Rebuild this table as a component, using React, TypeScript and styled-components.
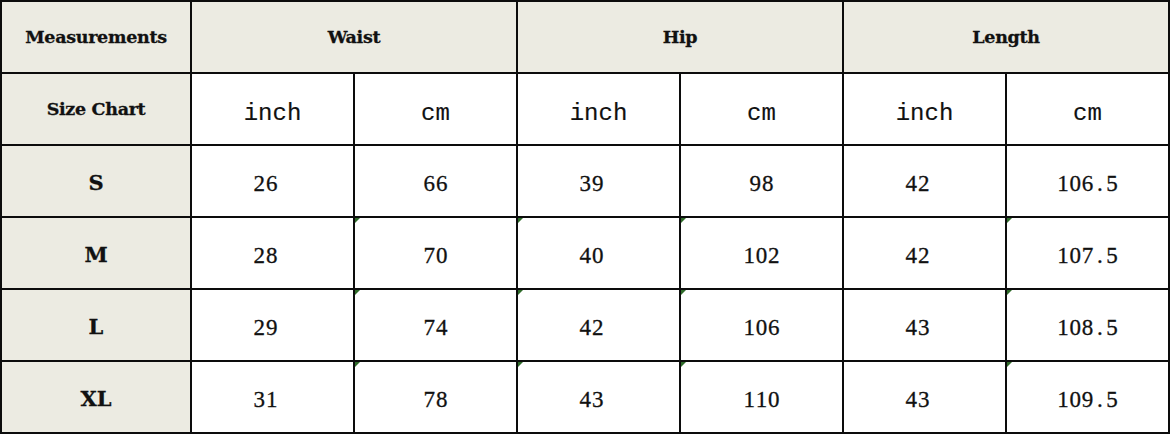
import React from "react";
import styled, { createGlobalStyle, css } from "styled-components";

const Global = createGlobalStyle`
  html, body { margin: 0; padding: 0; background: #fff; }
  body { font-family: "Liberation Serif", serif; }
`;

const Grid = styled.div`
  width: 1170px;
  height: 434px;
  box-sizing: border-box;
  display: grid;
  grid-template-columns: 188px repeat(6, 1fr);
  grid-template-rows: repeat(6, 1fr);
  gap: 2px;
  padding: 2px;
  background: #0c0c0c;
`;

const Cell = styled.div<{ $head?: boolean; $span?: number; $flag?: boolean; $shift?: boolean }>`
  position: relative;
  display: flex;
  align-items: center;
  justify-content: center;
  background: ${(p) => (p.$head ? "#ecebe2" : "#ffffff")};
  color: #111;
  ${(p) => p.$span && css`grid-column: span ${p.$span};`}
  ${(p) => p.$shift && css`padding-right: 14px;`}
  ${(p) =>
    p.$flag &&
    css`
      &::before {
        content: "";
        position: absolute;
        top: 0;
        left: 0;
        border-top: 5px solid #2f6b2a;
        border-right: 5px solid transparent;
      }
    `}
`;

const HeadText = styled.span<{ $big?: boolean }>`
  font-family: "DejaVu Serif", "Liberation Serif", serif;
  font-weight: 700;
  font-size: ${(p) => (p.$big ? "21px" : "17.5px")};
  letter-spacing: ${(p) => (p.$big ? "0" : "-0.3px")};
  -webkit-text-stroke: 0.3px #111;
  transform: translateY(${(p) => (p.$big ? "1px" : "0px")});
`;

const Unit = styled.span`
  font-family: "Liberation Mono", monospace;
  font-size: 24px;
  -webkit-text-stroke: 0.15px #111;
  transform: translateY(4px);
`;

const Num = styled.span`
  font-family: "Liberation Serif", serif;
  font-size: 23px;
  display: inline-flex;
  -webkit-text-stroke: 0.3px #111;
  transform: translateY(3px);
`;

const Glyph = styled.span`
  display: inline-block;
  width: 12.3px;
  text-align: center;
`;

const Mono = ({ text }: { text: string }) => (
  <Num>
    {text.split("").map((ch, i) => (
      <Glyph key={i}>{ch}</Glyph>
    ))}
  </Num>
);

const rows: [string, string[]][] = [
  ["S", ["26", "66", "39", "98", "42", "106.5"]],
  ["M", ["28", "70", "40", "102", "42", "107.5"]],
  ["L", ["29", "74", "42", "106", "43", "108.5"]],
  ["XL", ["31", "78", "43", "110", "43", "109.5"]],
];

const flagCols = [1, 2, 3, 5];

export default function App() {
  return (
    <>
      <Global />
      <Grid>
        <Cell $head>
          <HeadText>Measurements</HeadText>
        </Cell>
        <Cell $head $span={2}>
          <HeadText>Waist</HeadText>
        </Cell>
        <Cell $head $span={2}>
          <HeadText>Hip</HeadText>
        </Cell>
        <Cell $head $span={2}>
          <HeadText>Length</HeadText>
        </Cell>

        <Cell $head>
          <HeadText>Size Chart</HeadText>
        </Cell>
        {["inch", "cm", "inch", "cm", "inch", "cm"].map((u, i) => (
          <Cell key={i}>
            <Unit>{u}</Unit>
          </Cell>
        ))}

        {rows.map(([size, vals], r) => (
          <React.Fragment key={size}>
            <Cell $head>
              <HeadText $big>{size}</HeadText>
            </Cell>
            {vals.map((v, c) => (
              <Cell key={c} $shift={c % 2 === 0} $flag={r > 0 && flagCols.includes(c)}>
                <Mono text={v} />
              </Cell>
            ))}
          </React.Fragment>
        ))}
      </Grid>
    </>
  );
}
